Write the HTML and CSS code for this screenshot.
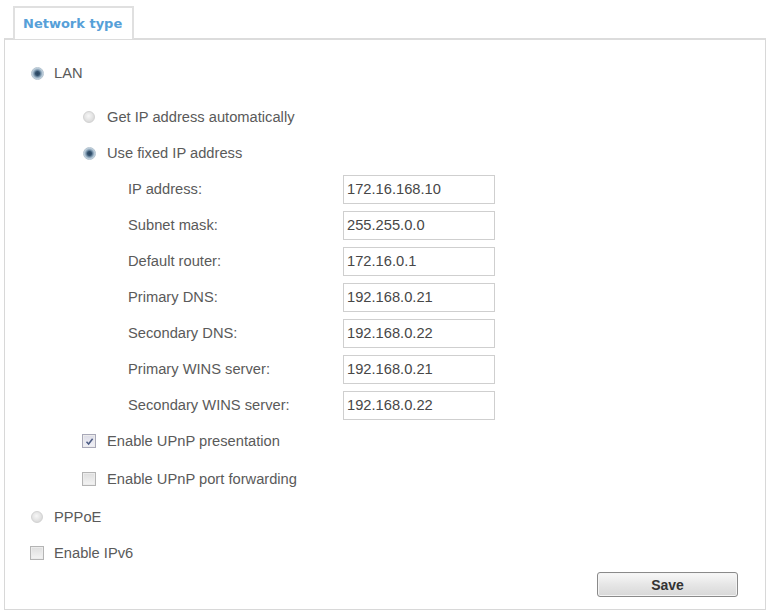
FILE: index.html
```html
<!DOCTYPE html>
<html>
<head>
<meta charset="utf-8">
<link rel="stylesheet" href="styles.css">
</head>
<body>
<div class="tabbar"><div class="tab">Network type</div></div>
<div class="panel">
  <div class="row lvl1"><span class="ctl"><span class="radio on"></span></span><span>LAN</span></div>
  <div class="row lvl2 gap8"><span class="ctl"><span class="radio"></span></span><span>Get IP address automatically</span></div>
  <div class="row lvl2"><span class="ctl"><span class="radio on"></span></span><span>Use fixed IP address</span></div>
  <div class="row field"><span class="lbl">IP address:</span><span class="input">172.16.168.10</span></div>
  <div class="row field"><span class="lbl">Subnet mask:</span><span class="input">255.255.0.0</span></div>
  <div class="row field"><span class="lbl">Default router:</span><span class="input">172.16.0.1</span></div>
  <div class="row field"><span class="lbl">Primary DNS:</span><span class="input">192.168.0.21</span></div>
  <div class="row field"><span class="lbl">Secondary DNS:</span><span class="input">192.168.0.22</span></div>
  <div class="row field"><span class="lbl">Primary WINS server:</span><span class="input">192.168.0.21</span></div>
  <div class="row field"><span class="lbl">Secondary WINS server:</span><span class="input">192.168.0.22</span></div>
  <div class="row lvl2"><span class="ctl"><span class="check on"><svg width="11" height="11" viewBox="0 0 11 11"><path d="M2.5 5.8 L4.6 8 L8.6 2.8" fill="none" stroke="#4d5d84" stroke-width="1.5"/></svg></span></span><span>Enable UPnP presentation</span></div>
  <div class="row lvl2 gap2"><span class="ctl"><span class="check"></span></span><span>Enable UPnP port forwarding</span></div>
  <div class="row lvl1 gap2"><span class="ctl"><span class="radio"></span></span><span>PPPoE</span></div>
  <div class="row lvl1"><span class="ctl"><span class="check"></span></span><span>Enable IPv6</span></div>
  <div class="actions"><span class="btn">Save</span></div>
</div>
</body>
</html>
```
FILE: styles.css
```css
html, body {
  margin: 0;
  padding: 0;
  background: #ffffff;
}
body {
  font-family: "Liberation Sans", Arial, sans-serif;
  font-size: 14.7px;
  color: #5a5a5a;
  width: 768px;
  height: 612px;
  overflow: hidden;
}
.tabbar {
  display: flex;
  padding: 6px 0 0 13px;
  height: 32px;
}
.tab {
  box-sizing: border-box;
  width: 121px;
  height: 33px;
  border: 2px solid #e0e0e0;
  border-bottom: none;
  background: #ffffff;
  display: flex;
  align-items: center;
  padding-left: 8px;
  font-family: "DejaVu Sans", Verdana, sans-serif;
  font-weight: bold;
  font-size: 13px;
  color: #56a0d8;
  position: relative;
  z-index: 1;
}
.panel {
  box-sizing: border-box;
  margin: 0 2px 0 4px;
  height: 572px;
  border: 1px solid #d8d8d8;
  border-top: 2px solid #dcdcdc;
  padding-top: 15px;
  display: flex;
  flex-direction: column;
}
.row {
  display: flex;
  align-items: center;
  height: 36px;
  flex: none;
}
.lvl1 { padding-left: 25px; }
.lvl2 { padding-left: 77px; }
.gap8 { margin-top: 8px; }
.gap2 { margin-top: 2px; }
.ctl {
  width: 14px;
  margin-right: 10px;
  display: flex;
  justify-content: center;
  align-items: center;
}
.lvl2 .ctl { margin-right: 11px; }
.radio {
  box-sizing: border-box;
  width: 12px;
  height: 12px;
  border-radius: 50%;
  border: 1px solid #d2d2d2;
  background: radial-gradient(circle at 45% 40%, #f7f7f7 0, #e2e2e2 55%, #d0d0d0 100%);
}
.radio.on {
  width: 13px;
  height: 13px;
  border: 1px solid #b4c4d0;
  background: radial-gradient(circle, #2a4560 0, #34526e 2px, #7591a8 3.4px, #b2c5d4 4.8px, #dbe5ed 6.5px);
}
.check {
  box-sizing: border-box;
  width: 14px;
  height: 14px;
  border: 1px solid #b4b4b4;
  background: linear-gradient(#dedede, #f4f4f4);
  box-shadow: inset 0 0 0 1px #ececec;
  display: flex;
  align-items: center;
  justify-content: center;
}
.check.on {
  border-color: #a8a8b8;
  background: linear-gradient(#dcdce6, #f2f2f8);
}
.field { padding-left: 123px; }
.lbl { width: 215px; }
.input {
  box-sizing: border-box;
  width: 152px;
  height: 29px;
  border: 1px solid #cfcfcf;
  padding-left: 3px;
  display: flex;
  align-items: center;
  color: #474747;
  background: #ffffff;
}
.actions {
  display: flex;
  justify-content: flex-end;
  padding-right: 27px;
  margin-top: 1px;
}
.btn {
  box-sizing: border-box;
  width: 141px;
  height: 25px;
  border: 1px solid #8a8a8a;
  border-radius: 3px;
  background: linear-gradient(#f8f8f8, #e6e6e6 50%, #d8d8d8);
  box-shadow: inset 0 0 0 1px #f4f4f4;
  display: flex;
  align-items: center;
  justify-content: center;
  color: #333333;
  font-size: 14px;
  font-weight: bold;
}
```
